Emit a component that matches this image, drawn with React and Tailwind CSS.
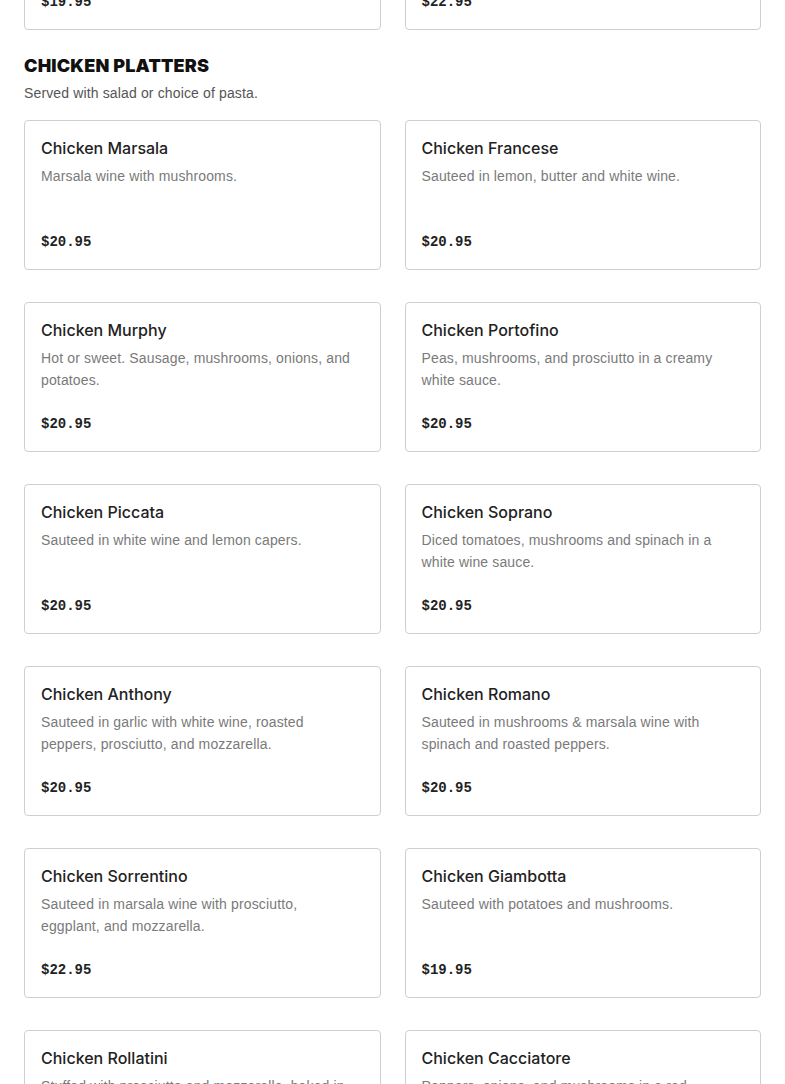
const PREV = [
  { name: "", desc: "", price: "$19.95" },
  { name: "", desc: "", price: "$22.95" },
];

const PLATTERS = [
  { name: "Chicken Marsala", desc: "Marsala wine with mushrooms.", price: "$20.95" },
  { name: "Chicken Francese", desc: "Sauteed in lemon, butter and white wine.", price: "$20.95" },
  { name: "Chicken Murphy", desc: "Hot or sweet. Sausage, mushrooms, onions, and potatoes.", price: "$20.95" },
  { name: "Chicken Portofino", desc: "Peas, mushrooms, and prosciutto in a creamy white sauce.", price: "$20.95" },
  { name: "Chicken Piccata", desc: "Sauteed in white wine and lemon capers.", price: "$20.95" },
  { name: "Chicken Soprano", desc: "Diced tomatoes, mushrooms and spinach in a white wine sauce.", price: "$20.95" },
  { name: "Chicken Anthony", desc: "Sauteed in garlic with white wine, roasted peppers, prosciutto, and mozzarella.", price: "$20.95" },
  { name: "Chicken Romano", desc: "Sauteed in mushrooms & marsala wine with spinach and roasted peppers.", price: "$20.95" },
  { name: "Chicken Sorrentino", desc: "Sauteed in marsala wine with prosciutto, eggplant, and mozzarella.", price: "$22.95" },
  { name: "Chicken Giambotta", desc: "Sauteed with potatoes and mushrooms.", price: "$19.95" },
  { name: "Chicken Rollatini", desc: "Stuffed with prosciutto and mozzarella, baked in a marsala wine sauce.", price: "$22.95" },
  { name: "Chicken Cacciatore", desc: "Peppers, onions, and mushrooms in a red marinara sauce.", price: "$20.95" },
];

function MenuCard({ item }) {
  return (
    <div className="flex h-[150px] flex-col rounded-[4px] border border-[#cfcfcf] bg-white pl-4 pr-[26px] pt-[15px] pb-[17px]">
      <h3 className="text-[16px] leading-6 font-medium text-[#222] font-['Inter',sans-serif]">
        {item.name}
      </h3>
      <p className="mt-[5px] text-[14px] leading-[22px] text-[#7a7a7a] font-['Liberation_Sans',sans-serif] tracking-[0.01em]">
        {item.desc}
      </p>
      <div className="mt-auto text-[14px] leading-5 font-bold text-[#222] font-['Liberation_Mono',monospace]">
        {item.price}
      </div>
    </div>
  );
}

export default function App() {
  return (
    <div className="min-h-screen bg-white">
      <div className="-mt-[120px] px-6 pb-10">
        <div className="grid grid-cols-2 gap-x-6">
          {PREV.map((item, i) => (
            <MenuCard key={i} item={item} />
          ))}
        </div>

        <section className="mt-6">
          <h2 className="text-[18px] leading-6 font-black uppercase text-[#111] font-['Inter',sans-serif] tracking-[0.01em]">
            Chicken Platters
          </h2>
          <p className="mt-[5px] text-[14px] leading-5 text-[#555] font-['Liberation_Sans',sans-serif] tracking-[0.01em]">
            Served with salad or choice of pasta.
          </p>
          <div className="mt-[17px] grid grid-cols-2 gap-x-6 gap-y-8">
            {PLATTERS.map((item) => (
              <MenuCard key={item.name} item={item} />
            ))}
          </div>
        </section>
      </div>
    </div>
  );
}
